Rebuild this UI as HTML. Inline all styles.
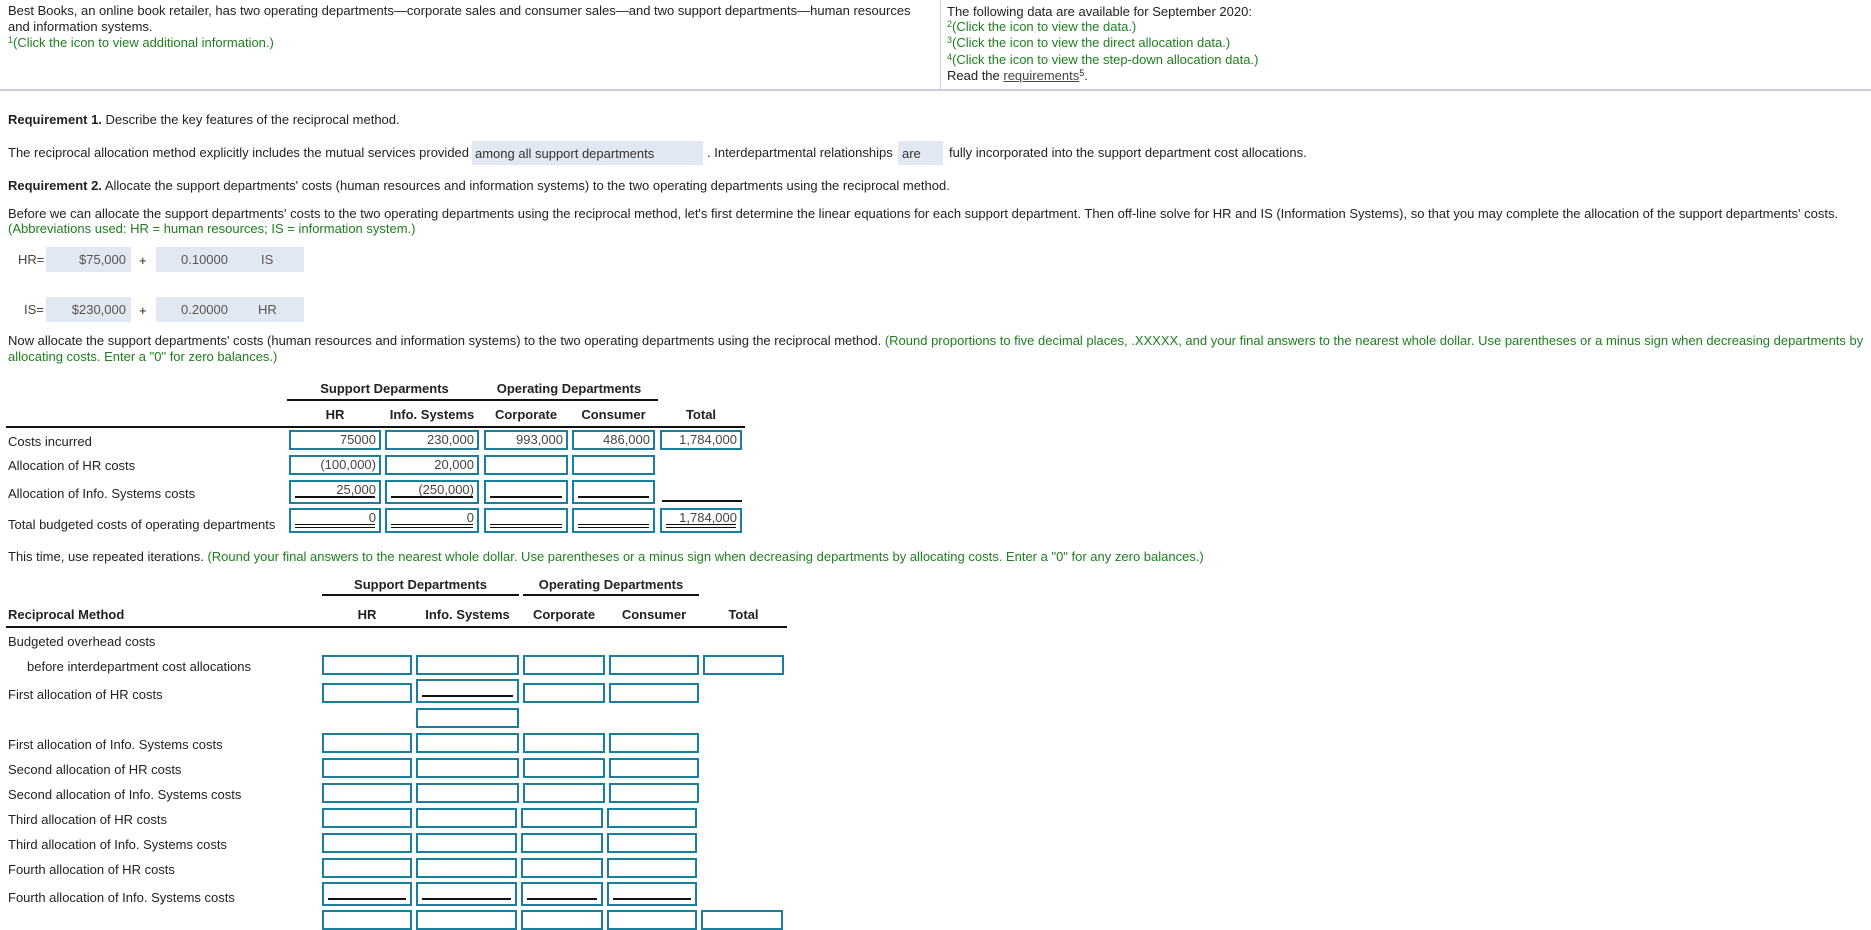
<!DOCTYPE html>
<html><head><meta charset="utf-8"><style>
body{margin:0;width:1871px;height:922px;overflow:hidden;background:#fff;font-family:"Liberation Sans",Arial,sans-serif;font-size:13px;color:#222;position:relative}
.t{position:absolute;white-space:nowrap;line-height:16px}
.g{color:#1e7f1e}
b{font-weight:bold}
.b{position:absolute;border:2px solid #1a7f9c;box-sizing:border-box;background:#fff;text-align:right;padding-right:3px;line-height:15px;font-size:13px;color:#444}
.gb{position:absolute;background:#e2e8f2;line-height:25px;color:#333}
.ul{position:absolute;border-bottom:2px solid #111;left:4px;right:4px;bottom:4px}
.dl{position:absolute;border-bottom:1px solid #111;border-top:1px solid #111;height:2px;left:4px;right:4px;bottom:3px}
.h{position:absolute;background:#111;height:2px}
.c{text-align:center}
sup{font-size:9px;vertical-align:top;line-height:10px}
</style></head><body>
<div class="t" style="left:8px;top:3px">Best Books, an online book retailer, has two operating departments—corporate sales and consumer sales—and two support departments—human resources</div>
<div class="t" style="left:8px;top:19px">and information systems.</div>
<div class="t g" style="left:8px;top:35px"><sup>1</sup>(Click the icon to view additional information.)</div>
<div style="position:absolute;left:940px;top:0;width:1px;height:90px;background:#c8cde0"></div>
<div style="position:absolute;left:0;top:89px;width:1871px;height:2px;background:#c8cde0"></div>
<div class="t" style="left:947px;top:4px">The following data are available for September 2020:</div>
<div class="t g" style="left:947px;top:19px"><sup>2</sup>(Click the icon to view the data.)</div>
<div class="t g" style="left:947px;top:35px"><sup>3</sup>(Click the icon to view the direct allocation data.)</div>
<div class="t g" style="left:947px;top:52px"><sup>4</sup>(Click the icon to view the step-down allocation data.)</div>
<div class="t" style="left:947px;top:68px">Read the <u style="color:#444">requirements</u><sup>5</sup>.</div>

<div class="t" style="left:8px;top:112px"><b>Requirement 1.</b> Describe the key features of the reciprocal method.</div>
<div class="t" style="left:8px;top:145px">The reciprocal allocation method explicitly includes the mutual services provided</div>
<div class="gb" style="left:472px;top:141px;width:231px;height:24px;padding-left:3px;box-sizing:border-box">among all support departments</div>
<div class="t" style="left:707px;top:145px">. Interdepartmental relationships</div>
<div class="gb" style="left:898px;top:141px;width:45px;height:24px;padding-left:4px;box-sizing:border-box">are</div>
<div class="t" style="left:949px;top:145px">fully incorporated into the support department cost allocations.</div>

<div class="t" style="left:8px;top:178px"><b>Requirement 2.</b> Allocate the support departments' costs (human resources and information systems) to the two operating departments using the reciprocal method.</div>
<div class="t" style="left:8px;top:206px">Before we can allocate the support departments' costs to the two operating departments using the reciprocal method, let's first determine the linear equations for each support department. Then off-line solve for HR and IS (Information Systems), so that you may complete the allocation of the support departments' costs.</div>
<div class="t g" style="left:8px;top:221px">(Abbreviations used: HR = human resources; IS = information system.)</div>

<div class="t" style="left:18px;top:252px;color:#444">HR=</div>
<div class="gb" style="left:46px;top:247px;width:85px;height:25px;text-align:right;padding-right:5px;box-sizing:border-box;color:#555">$75,000</div>
<div class="t" style="left:139px;top:253px">+</div>
<div class="gb" style="left:156px;top:247px;width:148px;height:25px;color:#555"><span style="position:absolute;left:25px">0.10000</span><span style="position:absolute;left:105px">IS</span></div>
<div class="t" style="left:24px;top:302px;color:#444">IS=</div>
<div class="gb" style="left:46px;top:297px;width:85px;height:25px;text-align:right;padding-right:5px;box-sizing:border-box;color:#555">$230,000</div>
<div class="t" style="left:139px;top:303px">+</div>
<div class="gb" style="left:156px;top:297px;width:148px;height:25px;color:#555"><span style="position:absolute;left:25px">0.20000</span><span style="position:absolute;left:102px">HR</span></div>

<div class="t" style="left:8px;top:333px">Now allocate the support departments' costs (human resources and information systems) to the two operating departments using the reciprocal method. <span class="g">(Round proportions to five decimal places, .XXXXX, and your final answers to the nearest whole dollar. Use parentheses or a minus sign when decreasing departments by</span></div>
<div class="t g" style="left:8px;top:349px">allocating costs. Enter a "0" for zero balances.)</div>

<!-- table 1 -->
<div class="t c" style="left:287px;top:381px;width:195px"><b>Support Deparments</b></div>
<div class="t c" style="left:480px;top:381px;width:178px"><b>Operating Departments</b></div>
<div class="h" style="left:287px;top:399px;width:371px"></div>
<div class="t c" style="left:289px;top:407px;width:92px"><b>HR</b></div>
<div class="t c" style="left:385px;top:407px;width:94px"><b>Info. Systems</b></div>
<div class="t c" style="left:484px;top:407px;width:84px"><b>Corporate</b></div>
<div class="t c" style="left:572px;top:407px;width:83px"><b>Consumer</b></div>
<div class="t c" style="left:660px;top:407px;width:82px"><b>Total</b></div>
<div class="h" style="left:6px;top:426px;width:739px"></div>

<div class="t" style="left:8px;top:434px">Costs incurred</div>
<div class="b" style="left:289px;top:430px;width:92px;height:20px">75000</div>
<div class="b" style="left:385px;top:430px;width:94px;height:20px">230,000</div>
<div class="b" style="left:484px;top:430px;width:84px;height:20px">993,000</div>
<div class="b" style="left:572px;top:430px;width:83px;height:20px">486,000</div>
<div class="b" style="left:660px;top:430px;width:82px;height:20px">1,784,000</div>

<div class="t" style="left:8px;top:458px">Allocation of HR costs</div>
<div class="b" style="left:289px;top:455px;width:92px;height:20px">(100,000)</div>
<div class="b" style="left:385px;top:455px;width:94px;height:20px">20,000</div>
<div class="b" style="left:484px;top:455px;width:84px;height:20px"></div>
<div class="b" style="left:572px;top:455px;width:83px;height:20px"></div>

<div class="t" style="left:8px;top:486px">Allocation of Info. Systems costs</div>
<div class="b" style="left:289px;top:480px;width:92px;height:24px">25,000<div class="ul"></div></div>
<div class="b" style="left:385px;top:480px;width:94px;height:24px">(250,000)<div class="ul"></div></div>
<div class="b" style="left:484px;top:480px;width:84px;height:24px"><div class="ul"></div></div>
<div class="b" style="left:572px;top:480px;width:83px;height:24px"><div class="ul"></div></div>
<div class="h" style="left:662px;top:500px;width:80px"></div>

<div class="t" style="left:8px;top:517px">Total budgeted costs of operating departments</div>
<div class="b" style="left:289px;top:508px;width:92px;height:25px">0<div class="dl"></div></div>
<div class="b" style="left:385px;top:508px;width:94px;height:25px">0<div class="dl"></div></div>
<div class="b" style="left:484px;top:508px;width:84px;height:25px"><div class="dl"></div></div>
<div class="b" style="left:572px;top:508px;width:83px;height:25px"><div class="dl"></div></div>
<div class="b" style="left:660px;top:508px;width:82px;height:25px">1,784,000<div class="dl"></div></div>

<div class="t" style="left:8px;top:549px">This time, use repeated iterations. <span class="g">(Round your final answers to the nearest whole dollar. Use parentheses or a minus sign when decreasing departments by allocating costs. Enter a "0" for any zero balances.)</span></div>

<!-- table 2 -->
<div class="t c" style="left:322px;top:577px;width:197px"><b>Support Departments</b></div>
<div class="t c" style="left:523px;top:577px;width:176px"><b>Operating Departments</b></div>
<div class="h" style="left:322px;top:594px;width:197px"></div>
<div class="h" style="left:523px;top:594px;width:176px"></div>
<div class="t" style="left:8px;top:607px"><b>Reciprocal Method</b></div>
<div class="t c" style="left:322px;top:607px;width:90px"><b>HR</b></div>
<div class="t c" style="left:416px;top:607px;width:103px"><b>Info. Systems</b></div>
<div class="t c" style="left:523px;top:607px;width:82px"><b>Corporate</b></div>
<div class="t c" style="left:609px;top:607px;width:90px"><b>Consumer</b></div>
<div class="t c" style="left:703px;top:607px;width:81px"><b>Total</b></div>
<div class="h" style="left:6px;top:626px;width:781px"></div>

<div class="t" style="left:8px;top:634px">Budgeted overhead costs</div>
<div class="t" style="left:27px;top:659px">before interdepartment cost allocations</div>
<div class="b" style="left:322px;top:655px;width:90px;height:20px"></div>
<div class="b" style="left:416px;top:655px;width:103px;height:20px"></div>
<div class="b" style="left:523px;top:655px;width:82px;height:20px"></div>
<div class="b" style="left:609px;top:655px;width:90px;height:20px"></div>
<div class="b" style="left:703px;top:655px;width:81px;height:20px"></div>

<div class="t" style="left:8px;top:687px">First allocation of HR costs</div>
<div class="b" style="left:322px;top:683px;width:90px;height:20px"></div>
<div class="b" style="left:416px;top:679px;width:103px;height:24px"><div class="ul"></div></div>
<div class="b" style="left:523px;top:683px;width:82px;height:20px"></div>
<div class="b" style="left:609px;top:683px;width:90px;height:20px"></div>
<div class="b" style="left:416px;top:708px;width:103px;height:20px"></div>

<div class="t" style="left:8px;top:737px">First allocation of Info. Systems costs</div>
<div class="t" style="left:8px;top:762px">Second allocation of HR costs</div>
<div class="t" style="left:8px;top:787px">Second allocation of Info. Systems costs</div>
<div class="t" style="left:8px;top:812px">Third allocation of HR costs</div>
<div class="t" style="left:8px;top:837px">Third allocation of Info. Systems costs</div>
<div class="t" style="left:8px;top:862px">Fourth allocation of HR costs</div>
<div class="t" style="left:8px;top:890px">Fourth allocation of Info. Systems costs</div>

<div class="b" style="left:322px;top:733px;width:90px;height:20px"></div><div class="b" style="left:416px;top:733px;width:103px;height:20px"></div><div class="b" style="left:523px;top:733px;width:82px;height:20px"></div><div class="b" style="left:609px;top:733px;width:90px;height:20px"></div>
<div class="b" style="left:322px;top:758px;width:90px;height:20px"></div><div class="b" style="left:416px;top:758px;width:103px;height:20px"></div><div class="b" style="left:523px;top:758px;width:82px;height:20px"></div><div class="b" style="left:609px;top:758px;width:90px;height:20px"></div>
<div class="b" style="left:322px;top:783px;width:90px;height:20px"></div><div class="b" style="left:416px;top:783px;width:103px;height:20px"></div><div class="b" style="left:523px;top:783px;width:82px;height:20px"></div><div class="b" style="left:609px;top:783px;width:90px;height:20px"></div>
<div class="b" style="left:322px;top:808px;width:90px;height:20px"></div><div class="b" style="left:416px;top:808px;width:101px;height:20px"></div><div class="b" style="left:521px;top:808px;width:82px;height:20px"></div><div class="b" style="left:607px;top:808px;width:90px;height:20px"></div>
<div class="b" style="left:322px;top:833px;width:90px;height:20px"></div><div class="b" style="left:416px;top:833px;width:101px;height:20px"></div><div class="b" style="left:521px;top:833px;width:82px;height:20px"></div><div class="b" style="left:607px;top:833px;width:90px;height:20px"></div>
<div class="b" style="left:322px;top:858px;width:90px;height:20px"></div><div class="b" style="left:416px;top:858px;width:101px;height:20px"></div><div class="b" style="left:521px;top:858px;width:82px;height:20px"></div><div class="b" style="left:607px;top:858px;width:90px;height:20px"></div>
<div class="b" style="left:322px;top:882px;width:90px;height:24px"><div class="ul"></div></div><div class="b" style="left:416px;top:882px;width:101px;height:24px"><div class="ul"></div></div><div class="b" style="left:521px;top:882px;width:82px;height:24px"><div class="ul"></div></div><div class="b" style="left:607px;top:882px;width:90px;height:24px"><div class="ul"></div></div>
<div class="b" style="left:322px;top:910px;width:90px;height:20px"></div><div class="b" style="left:416px;top:910px;width:101px;height:20px"></div><div class="b" style="left:521px;top:910px;width:82px;height:20px"></div><div class="b" style="left:607px;top:910px;width:90px;height:20px"></div><div class="b" style="left:701px;top:910px;width:82px;height:20px"></div>
</body></html>
